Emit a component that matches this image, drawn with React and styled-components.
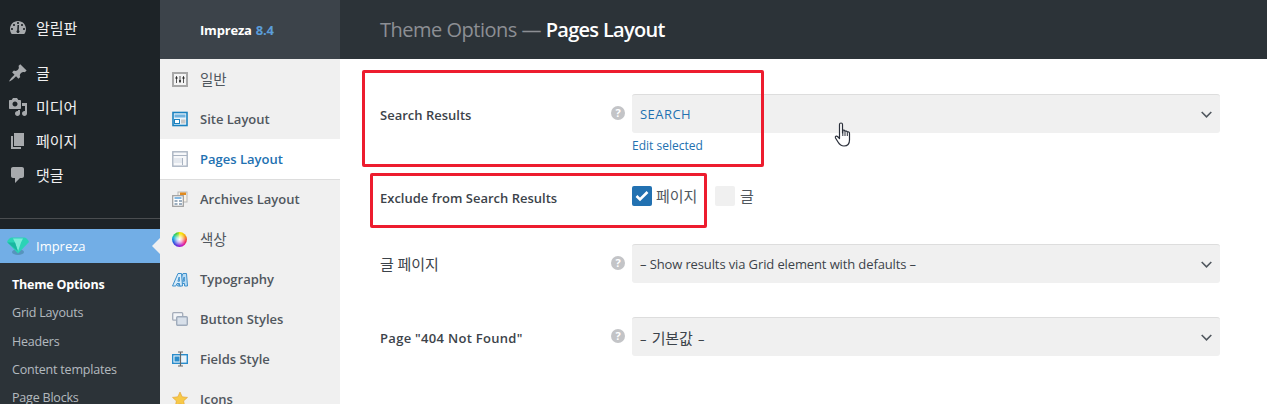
import React from 'react';
import styled, { createGlobalStyle } from 'styled-components';

const FONT = '"Open Sans", "Noto Sans CJK KR", sans-serif';

const Global = createGlobalStyle`
  html, body { margin: 0; padding: 0; background: #fff; }
  body { font-family: ${FONT}; font-size: 13px; width: 1267px; height: 404px; overflow: hidden; }
`;

const Page = styled.div`
  display: flex;
  width: 1267px;
  height: 404px;
  overflow: hidden;
  position: relative;
`;

/* wp admin menu */
const AdminMenu = styled.nav`
  width: 160px;
  flex: none;
  background: #1d2327;
  padding-top: 11px;
`;
const MenuGroup = styled.div`
  margin-bottom: ${p => p.$gap || 0}px;
`;
const MenuItem = styled.div`
  height: 34px;
  display: flex;
  align-items: center;
  color: #f0f0f1;
  font-size: 15px;
  letter-spacing: -0.1px;
  span { margin-top: -2px; }
`;
const MenuIcon = styled.svg`
  width: 20px;
  height: 20px;
  margin: 0 8px 0 8px;
  flex: none;
  fill: #a7aaad;
`;
const Separator = styled.div`
  height: 1px;
  background: #4a4d50;
  margin-bottom: 10px;
`;
const ActiveItem = styled.div`
  height: 34px;
  background: #72aee6;
  color: #fff;
  display: flex;
  align-items: center;
  font-size: 13px;
  position: relative;
  &::after {
    content: '';
    position: absolute;
    right: 0;
    top: 9px;
    border: 8px solid transparent;
    border-right-color: #f0f0f1;
    border-left-width: 0;
  }
`;
const Gem = styled.svg`
  width: 24px;
  height: 20px;
  margin: 0 6px 0 6px;
  flex: none;
`;
const SubMenu = styled.div`
  background: #2c3338;
  padding-top: 8px;
  height: 140px;
`;
const SubItem = styled.div`
  height: 28.3px;
  line-height: 28.3px;
  padding-left: 12px;
  font-size: 12.5px;
  letter-spacing: -0.2px;
  white-space: nowrap;
  color: ${p => (p.$current ? '#fff' : 'rgba(240,246,252,0.7)')};
  font-weight: ${p => (p.$current ? 700 : 400)};
`;

/* theme options tabs */
const Tabs = styled.aside`
  width: 180px;
  flex: none;
  background: #f0f0f0;
`;
const TabsHead = styled.div`
  height: 59px;
  background: #3c434a;
  color: #fff;
  font-weight: 700;
  font-size: 13px;
  letter-spacing: -0.2px;
  padding-left: 40px;
  display: flex;
  align-items: center;
  span { color: #5b9dd9; margin-left: 4px; }
`;
const Tab = styled.div`
  height: ${p => (p.$active ? 41 : 40)}px;
  box-sizing: border-box;
  display: flex;
  align-items: center;
  padding-left: 12px;
  font-size: 13px;
  font-weight: 600;
  color: ${p => (p.$active ? '#2271b1' : '#50575e')};
  background: ${p => (p.$active ? '#fff' : 'transparent')};
  border-bottom: ${p => (p.$active ? '1px solid #ddd' : 'none')};
  margin-bottom: ${p => (p.$active ? -1 : 0)}px;
  white-space: nowrap;
`;
const TabLabelKo = styled.span`
  font-weight: 400;
  font-size: 14.5px;
  margin-top: -2px;
  color: #50575e;
`;
const TabIcon = styled.svg`
  width: 16px;
  height: 16px;
  margin-right: 12px;
  flex: none;
`;
const ColorWheel = styled.span`
  width: 15px;
  height: 15px;
  margin: 0 13px 0 0;
  border-radius: 50%;
  flex: none;
  background:
    radial-gradient(circle, #fff 0%, rgba(255, 255, 255, 0.7) 25%, rgba(255, 255, 255, 0) 62%),
    conic-gradient(#f6e200 20deg, #f59a10 60deg, #f0285a 110deg, #d018b8 150deg, #7a22d8 190deg, #1c5fe0 250deg, #10b8d8 290deg, #3fd23c 330deg, #f6e200 380deg);
`;

/* main */
const Main = styled.main`
  flex: 1;
  min-width: 0;
`;
const Header = styled.header`
  height: 59px;
  background: #2c3338;
  padding-left: 40px;
  display: flex;
  align-items: center;
  font-size: 20px;
  letter-spacing: -0.5px;
  color: #8c8f94;
  strong { color: #fff; font-weight: 600; letter-spacing: -0.7px; }
`;
const Rows = styled.div`
  padding: 35px 47px 0 40px;
`;
const Row = styled.div`
  display: grid;
  grid-template-columns: 252px 1fr;
  margin-bottom: ${p => p.$mb}px;
`;
const Label = styled.div`
  box-sizing: border-box;
  font-size: 13px;
  font-weight: 600;
  letter-spacing: ${p => p.$ls || 0}px;
  color: #3c434a;
  height: ${p => p.$h || 39}px;
  padding-top: ${p => p.$pt || 2}px;
  display: flex;
  align-items: center;
  position: relative;
`;
const LabelKo = styled.span`
  font-size: 15px;
  font-weight: 400;
  letter-spacing: -0.1px;
  margin-top: -2px;
`;
const Help = styled.span`
  position: absolute;
  right: 7px;
  top: 12px;
  width: 14px;
  height: 14px;
  border-radius: 50%;
  background: #c3c4c7;
  color: #fff;
  font-size: 11px;
  font-weight: 700;
  line-height: 14px;
  text-align: center;
  letter-spacing: 0;
`;
const Select = styled.div`
  height: 39px;
  box-sizing: border-box;
  background: #f0f0f0;
  border-top: 1px solid #ddd;
  border-radius: 3px;
  display: flex;
  align-items: center;
  justify-content: space-between;
  padding: 0 8px;
  font-size: 13px;
  letter-spacing: ${p => (p.$link ? '0.45px' : '-0.12px')};
  color: ${p => (p.$link ? '#2271b1' : '#3c434a')};
`;
const SelectKo = styled.span`
  font-size: 15px;
  letter-spacing: -0.1px;
  margin: 0 2px;
`;
const Chevron = styled.svg`
  width: 11px;
  height: 7px;
  fill: none;
  stroke: #50575e;
  stroke-width: 1.6;
`;
const EditLink = styled.a`
  display: block;
  margin-top: 5px;
  font-size: 12px;
  color: #2271b1;
  line-height: 16px;
`;
const Checks = styled.div`
  display: flex;
  align-items: center;
  height: 24px;
  gap: 4px;
`;
const Box = styled.span`
  width: 20px;
  height: 20px;
  border-radius: 2px;
  background: ${p => (p.$on ? '#2271b1' : '#f0f0f0')};
  display: flex;
  align-items: center;
  justify-content: center;
  margin-left: ${p => p.$ml || 0}px;
  margin-right: ${p => (p.$on ? 0 : 1)}px;
`;
const CheckText = styled.span`
  font-size: 15px;
  letter-spacing: -0.1px;
  color: #50575e;
  margin-top: -2px;
`;
const Note = styled.div`
  position: absolute;
  left: ${p => p.$x}px;
  top: ${p => p.$y}px;
  width: ${p => p.$w}px;
  height: ${p => p.$h}px;
  box-sizing: border-box;
  border: 3px solid #ed1c2e;
  border-radius: 2px;
  pointer-events: none;
`;
const Cursor = styled.svg`
  position: absolute;
  left: 834px;
  top: 122px;
  width: 21px;
  height: 26px;
`;

const icons = {
  dash: <path fillRule="evenodd" d="M3.760 16h12.480c1.100-1.370 1.760-3.110 1.760-5 0-4.420-3.580-8-8-8s-8 3.580-8 8c0 1.890.66 3.630 1.760 5zM10 4c.55 0 1 .45 1 1s-.45 1-1 1-1-.45-1-1 .45-1 1-1zM6 6c.55 0 1 .45 1 1s-.45 1-1 1-1-.45-1-1 .45-1 1-1zM14 6c.55 0 1 .45 1 1s-.45 1-1 1-1-.45-1-1 .45-1 1-1zM4 10c.55 0 1 .45 1 1s-.45 1-1 1-1-.45-1-1 .45-1 1-1zM16 10c.55 0 1 .45 1 1s-.45 1-1 1-1-.45-1-1 .45-1 1-1zM11 7l-.2 5.200a1.500 1.500 0 1 1-1.600 0L9.500 7z" />,
  pin: <path d="M10.440 3.020l1.820-1.820 6.360 6.350-1.830 1.820c-1.050-.68-2.480-.57-3.410.36l-.75.75c-.92.93-1.040 2.350-.35 3.410l-1.830 1.820-2.410-2.410-2.800 2.790c-.42.42-3.380 2.710-3.800 2.290s1.860-3.390 2.280-3.810l2.790-2.790L4.100 9.360l1.830-1.820c1.050.69 2.480.57 3.400-.36l.75-.75c.93-.92 1.050-2.350.36-3.410z" />,
  media: <path fillRule="evenodd" d="M13 11V4c0-.55-.45-1-1-1h-1.670L9 1H5L3.670 3H2c-.55 0-1 .45-1 1v7c0 .55.45 1 1 1h10c.55 0 1-.45 1-1zM7 4.500c1.380 0 2.500 1.120 2.500 2.500S8.380 9.500 7 9.500 4.500 8.380 4.500 7 5.620 4.500 7 4.500zM14 6h5v10.500c0 1.380-1.120 2.500-2.500 2.500S14 17.880 14 16.500s1.120-2.500 2.500-2.500c.17 0 .34.02.5.05V9h-3V6zm-4 8.050V13h2v3.500c0 1.380-1.120 2.500-2.500 2.500S7 17.880 7 16.500 8.120 14 9.500 14c.17 0 .34.02.5.05z" />,
  pages: <path d="M6 15V2h10v13H6zm-1 1h8v2H3V5h2v11z" />,
  comments: <path d="M5 2h9c1.100 0 2 .9 2 2v7c0 1.100-.9 2-2 2h-2l-5 5v-5H5c-1.100 0-2-.9-2-2V4c0-1.100.9-2 2-2z" />,
};

const letterA = 'M.5 14L6 1.500h3.500L10.500 14H7.600l-.1-2.500H5L3.800 14zM5.900 9.200h1.500L7.200 5z';

const tabIcons = {
  general: <><rect x="1" y="2" width="14" height="13" fill="#f4f4f4" stroke="#a8a8a8" strokeWidth="2" /><path d="M4.500 5v7M8 5v7M11.500 5v7" stroke="#555" /><path d="M3.500 7h2M7 10h2M10.500 7h2" stroke="#222" strokeWidth="1.500" /></>,
  site: <><rect x="1" y="1.500" width="14" height="13" fill="#eaf4fb" stroke="#1b82c0" strokeWidth="1.600" /><rect x="2.500" y="3.500" width="11" height="3" fill="#6fb2df" /><rect x="2.500" y="8.500" width="5" height="4" fill="#fff" stroke="#1b82c0" /><rect x="9" y="8.500" width="4.500" height="4" fill="#c8c8c8" /></>,
  pages: <><rect x=".8" y=".8" width="14.400" height="14.400" fill="#f7f8fa" stroke="#aab4c2" strokeWidth="1.400" /><path d="M1 4.500h14M10.500 7v7" stroke="#aab4c2" /><path d="M2 7h8v5H2z" fill="#e4e8ee" /></>,
  archives: <><rect x="6" y="1" width="9" height="10" fill="#f8f2e6" stroke="#b8b8b8" /><rect x="8" y="1.500" width="6" height="2.500" fill="#e08a1e" /><rect x=".7" y="4.700" width="10.600" height="10.600" fill="#fff" stroke="#a0a0a0" strokeWidth="1.300" /><path d="M2.500 7h7" stroke="#5aa0d8" strokeWidth="1.500" /><path d="M2.500 10h3M7 10h3M2.500 13h3M7 13h3" stroke="#3a5f80" strokeWidth="1.200" /></>,
  type: <><path d={letterA} fill="#b9dcf5" fillRule="evenodd" stroke="#3c8fcb" transform="translate(5 1)" /><path d={letterA} fill="#d8ecfa" fillRule="evenodd" stroke="#3c8fcb" transform="translate(0 1)" /></>,
  button: <><rect x=".7" y="1.700" width="10" height="7.500" rx="1" fill="#f3f5f8" stroke="#a4acb9" strokeWidth="1.300" /><rect x="4.700" y="5.700" width="10.600" height="8.500" rx="1" fill="#d8e0ea" stroke="#9fabbb" strokeWidth="1.400" /></>,
  field: <><rect x=".7" y="3.700" width="14.600" height="8.600" fill="#eaf4fb" stroke="#2a8ccb" strokeWidth="1.400" /><rect x="2.500" y="5.500" width="5" height="5" fill="#2a8ccb" /><path d="M8.500 1.500v13M6 1h5M6 15h5" stroke="#666" strokeWidth="1.200" /></>,
  star: <path d="M8 1l2.200 4.800 5.300.6-3.900 3.500 1.100 5.100L8 12.400 3.300 15l1.100-5.100L.5 6.400l5.300-.6z" fill="#f7c948" stroke="#e0a030" strokeWidth=".6" />,
};

const tabs = [
  ['general', '일반', 'ko'],
  ['site', 'Site Layout'],
  ['pages', 'Pages Layout', 'active'],
  ['archives', 'Archives Layout'],
  ['color', '색상', 'ko'],
  ['type', 'Typography'],
  ['button', 'Button Styles'],
  ['field', 'Fields Style'],
  ['star', 'Icons'],
];

const ChevronIcon = () => (
  <Chevron viewBox="0 0 11 7"><path d="M.7 1l4.800 4.800L10.300 1" /></Chevron>
);

export default function App() {
  return (
    <Page>
      <Global />
      <AdminMenu>
        <MenuGroup $gap={11}>
          <MenuItem><MenuIcon viewBox="0 0 20 20">{icons.dash}</MenuIcon><span>알림판</span></MenuItem>
        </MenuGroup>
        <MenuGroup $gap={26}>
          <MenuItem><MenuIcon viewBox="0 0 20 20">{icons.pin}</MenuIcon><span>글</span></MenuItem>
          <MenuItem><MenuIcon viewBox="0 0 20 20">{icons.media}</MenuIcon><span>미디어</span></MenuItem>
          <MenuItem><MenuIcon viewBox="0 0 20 20">{icons.pages}</MenuIcon><span>페이지</span></MenuItem>
          <MenuItem><MenuIcon viewBox="0 0 20 20">{icons.comments}</MenuIcon><span>댓글</span></MenuItem>
        </MenuGroup>
        <Separator />
        <ActiveItem>
          <Gem viewBox="0 0 24 20">
            <ellipse cx="12" cy="16" rx="6" ry="3" fill="#3f7f9a" opacity=".55" />
            <path d="M6 1.500h12c2 0 4 2 5 4.500L12 17.500 1 6c1-2.500 3-4.500 5-4.500z" fill="#2bd3b6" />
            <path d="M7 2.500h10L15 6.500H9zM9 6.500h6l-3 9z" fill="#7bebd8" />
            <path d="M1.500 6.500H9l3 9z" fill="#19b7a0" />
          </Gem>
          Impreza
        </ActiveItem>
        <SubMenu>
          <SubItem $current>Theme Options</SubItem>
          <SubItem>Grid Layouts</SubItem>
          <SubItem>Headers</SubItem>
          <SubItem>Content templates</SubItem>
          <SubItem>Page Blocks</SubItem>
        </SubMenu>
      </AdminMenu>

      <Tabs>
        <TabsHead>Impreza <span>8.4</span></TabsHead>
        {tabs.map(([icon, label, kind]) => (
          <Tab key={icon} $active={kind === 'active'}>
            {icon === 'color'
              ? <ColorWheel />
              : <TabIcon viewBox="0 0 16 16">{tabIcons[icon]}</TabIcon>}
            {kind === 'ko' ? <TabLabelKo>{label}</TabLabelKo> : label}
          </Tab>
        ))}
      </Tabs>

      <Main>
        <Header>Theme Options —&nbsp;<strong>Pages Layout</strong></Header>
        <Rows>
          <Row $mb={30}>
            <Label>Search Results<Help>?</Help></Label>
            <div>
              <Select $link>SEARCH<ChevronIcon /></Select>
              <EditLink>Edit selected</EditLink>
            </div>
          </Row>
          <Row $mb={36}>
            <Label $h={24} $pt={4}>Exclude from Search Results</Label>
            <Checks>
              <Box $on>
                <svg width="14" height="12" viewBox="0 0 14 12"><path d="M1.500 6l3.500 3.500L12.500 2" fill="none" stroke="#fff" strokeWidth="2.600" /></svg>
              </Box>
              <CheckText>페이지</CheckText>
              <Box $ml={14} />
              <CheckText>글</CheckText>
            </Checks>
          </Row>
          <Row $mb={34}>
            <Label><LabelKo>글 페이지</LabelKo><Help>?</Help></Label>
            <Select>– Show results via Grid element with defaults –<ChevronIcon /></Select>
          </Row>
          <Row $mb={0}>
            <Label $ls={0.3}>Page "404 Not Found"<Help>?</Help></Label>
            <Select><span>– <SelectKo>기본값</SelectKo> –</span><ChevronIcon /></Select>
          </Row>
        </Rows>
      </Main>

      <Note $x={362} $y={70} $w={402} $h={97} />
      <Note $x={370} $y={173} $w={337} $h={55} />
      <Cursor viewBox="0 0 20 26">
        <path d="M5 2.500a1.500 1.500 0 0 1 3 0V11l.3-2.700c1.500-.5 2 .2 2.200 1 1-.6 2-.3 2.300.8 1-.5 2.200 0 2.200 1.300V18c0 3.500-2 6-5.500 6-3 0-4.500-1.500-6-4L1 16c-.7-1.400 1-2.500 2-1.500l2 2z" fill="#fff" stroke="#2a2f3a" strokeWidth="1.200" strokeLinejoin="round" />
        <path d="M8.300 9v5M10.500 9.500V14M12.800 10.500V14" stroke="#2a2f3a" strokeWidth="1" />
      </Cursor>
    </Page>
  );
}
